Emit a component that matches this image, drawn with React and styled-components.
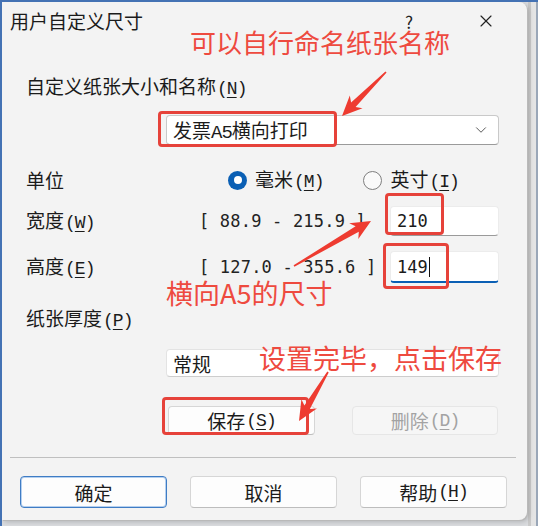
import React from 'react';
import styled, {createGlobalStyle} from 'styled-components';
import {ChevronDown, X} from 'lucide-react';

const GlobalStyle = createGlobalStyle`
  html, body {
    margin: 0;
    padding: 0;
  }
  body {
    font-family: "Noto Sans CJK SC", "Noto Sans", sans-serif;
    color: #1b1b1b;
  }
`;

const Screen = styled.div`
  position: relative;
  width: 538px;
  height: 526px;
  box-sizing: border-box;
  overflow: hidden;
  background: #dadcdf;
  border-left: 2px solid #4472b4;
  border-top: 2px solid #4472b4;
  display: flex;
  align-items: flex-start;
`;

const BackStrip = styled.div`
  position: absolute;
  top: 0;
  right: 0;
  width: 10px;
  height: 100%;
  background: linear-gradient(90deg, #c9c9c9 0 3px, #e4e4e4 3px 8px, #9aa7b8 8px);
`;

const Dialog = styled.div`
  position: relative;
  width: 525px;
  height: 518px;
  box-sizing: border-box;
  background: #f3f3f3;
  border-radius: 0 8px 8px 0;
  box-shadow: 1px 1px 0 #b9b9b9, 2px 2px 5px rgba(0, 0, 0, 0.18);
  display: flex;
  flex-direction: column;
`;

const TitleBar = styled.div`
  height: 38px;
  display: flex;
  align-items: center;
  padding: 0 18px 0 8px;
`;

const Title = styled.div`
  font-size: 19px;
  line-height: 24px;
  flex: 1;
`;

const TitleButton = styled.div`
  width: ${p => p.$w}px;
  margin-left: ${p => p.$ml || 0}px;
  height: 38px;
  display: flex;
  align-items: center;
  justify-content: center;
  font-size: 17px;
  color: #222;
`;

const Body = styled.div`
  padding: 0 28px 0 24px;
  display: flex;
  flex-direction: column;
`;

const Label = styled.div`
  font-size: 19px;
  line-height: 24px;
  margin-top: ${p => p.$gap || 0}px;
  width: ${p => (p.$w ? `${p.$w}px` : 'auto')};
  flex-shrink: 0;
  white-space: nowrap;
`;

const Paren = styled.span`
  font-family: "Liberation Mono", monospace;
  font-size: 18px;
  letter-spacing: -1px;
  margin-left: 1px;
`;

const Key = styled.span`
  text-decoration: underline;
  text-underline-offset: 3px;
`;

const Mnemonic = ({k}) => (
  <Paren>
    (<Key>{k}</Key>)
  </Paren>
);

const Combo = styled.div`
  margin: ${p => p.$gap}px 0 0 140px;
  width: 333px;
  height: ${p => p.$h}px;
  box-sizing: border-box;
  background: #fff;
  border: 1px solid ${p => (p.$plain ? '#e3e3e3' : '#c9c9c9')};
  border-bottom-color: ${p => (p.$plain ? '#cdcdcd' : '#9a9a9a')};
  border-radius: 4px;
  display: flex;
  align-items: center;
  padding: 0 8px 0 6px;
  font-size: 19px;
  justify-content: space-between;
`;

const Half = styled.span`
  font-family: "Liberation Mono", monospace;
  letter-spacing: -1px;
`;

const UnitRow = styled.div`
  margin-top: 23px;
  height: 24px;
  display: flex;
  align-items: center;
`;

const Radio = styled.div`
  display: flex;
  align-items: center;
  gap: 8px;
  margin-right: 40px;
  font-size: 19px;
  line-height: 24px;
`;

const RadioDot = styled.span`
  width: 19px;
  height: 19px;
  box-sizing: border-box;
  border-radius: 50%;
  display: grid;
  place-items: center;
  background: ${p => (p.$on ? '#0a5fb4' : '#fafafa')};
  border: ${p => (p.$on ? 'none' : '1px solid #7f7f7f')};
  &::after {
    content: '';
    width: 8px;
    height: 8px;
    border-radius: 50%;
    background: ${p => (p.$on ? '#fff' : 'transparent')};
  }
`;

const SizeRow = styled.div`
  margin-top: ${p => p.$gap}px;
  display: grid;
  grid-template-columns: 173px 191px 109px;
  align-items: center;
`;

const Range = styled.div`
  font-family: "DejaVu Sans Mono", monospace;
  font-size: 17px;
  letter-spacing: 0.2px;
  white-space: pre;
  color: #222;
`;

const Field = styled.div`
  height: ${p => p.$h}px;
  box-sizing: border-box;
  background: #fff;
  border: 1px solid #ececec;
  border-bottom: ${p => (p.$focus ? '2px solid #0a5fb4' : '1px solid #9a9a9a')};
  border-radius: 4px;
  padding-left: 6px;
  display: flex;
  align-items: center;
  font-family: "DejaVu Sans Mono", monospace;
  font-size: 17px;
`;

const Caret = styled.span`
  display: inline-block;
  width: 1px;
  height: 20px;
  background: #111;
  margin-left: 1px;
`;

const ButtonRow = styled.div`
  margin: 29px 0 0 142px;
  display: flex;
  gap: 37px;
`;

const Button = styled.div`
  width: ${p => p.$w || 147}px;
  height: ${p => p.$h || 29}px;
  box-sizing: border-box;
  border-radius: 4px;
  display: flex;
  align-items: center;
  justify-content: center;
  font-size: 19px;
  background: ${p => (p.$disabled ? '#f6f6f6' : '#fdfdfd')};
  color: ${p => (p.$disabled ? '#a3a3a3' : '#1b1b1b')};
  border: 1px solid ${p => (p.$primary ? '#3f7cc4' : p.$disabled ? '#e6e6e6' : '#d6d6d6')};
  border-bottom-color: ${p => (p.$primary ? '#3f7cc4' : p.$disabled ? '#e6e6e6' : '#bdbdbd')};
  box-shadow: ${p => (p.$primary ? 'inset 0 0 0 1px #b5d0ef' : 'none')};
`;

const Separator = styled.div`
  margin: 22px 11px 0 8px;
  height: 1px;
  background: #bfbfbf;
`;

const Footer = styled.div`
  margin-top: 18px;
  padding-left: 18px;
  display: flex;
  gap: 23px;
`;

const Note = styled.div`
  position: absolute;
  left: ${p => p.$x}px;
  top: ${p => p.$y}px;
  font-size: ${p => p.$size}px;
  line-height: 30px;
  color: #ee4a3f;
  white-space: nowrap;
`;

const Frame = styled.div`
  position: absolute;
  left: ${p => p.$x}px;
  top: ${p => p.$y}px;
  width: ${p => p.$w}px;
  height: ${p => p.$h}px;
  box-sizing: border-box;
  border: 3px solid #e6423a;
  border-radius: 4px;
`;

const Overlay = styled.svg`
  position: absolute;
  left: 0;
  top: 0;
  pointer-events: none;
`;

const arrowPoints = (x1, y1, x2, y2) => {
  const dx = x2 - x1;
  const dy = y2 - y1;
  const len = Math.hypot(dx, dy);
  const ux = dx / len;
  const uy = dy / len;
  const nx = -uy;
  const ny = ux;
  const head = 16;
  const bx = x2 - ux * head;
  const by = y2 - uy * head;
  const pts = [
    [x1 + nx * 0.8, y1 + ny * 0.8],
    [bx + nx * 3.2, by + ny * 3.2],
    [bx - ux * 4 + nx * 9, by - uy * 4 + ny * 9],
    [x2, y2],
    [bx - ux * 4 - nx * 9, by - uy * 4 - ny * 9],
    [bx - nx * 3.2, by - ny * 3.2],
    [x1 - nx * 0.8, y1 - ny * 0.8]
  ];
  return pts.map(p => p.map(v => v.toFixed(1)).join(',')).join(' ');
};

const arrows = [
  [384, 70, 340, 114],
  [292, 264, 369, 219],
  [326, 370, 297, 419]
];

const App = () => {
  return (
    <>
      <GlobalStyle />
      <Screen>
        <BackStrip />
        <Dialog>
          <TitleBar>
            <Title>用户自定义尺寸</Title>
            <TitleButton $w={20}>?</TitleButton>
            <TitleButton $w={46} $ml={44}>
              <X size={20} strokeWidth={1.4} />
            </TitleButton>
          </TitleBar>
          <Body>
            <Label $gap={34}>
              自定义纸张大小和名称<Mnemonic k="N" />
            </Label>
            <Combo $gap={14} $h={30}>
              <span>
                发票<Half>A5</Half>横向打印
              </span>
              <ChevronDown size={18} strokeWidth={1.3} color="#555" />
            </Combo>
            <UnitRow>
              <Label $w={202}>单位</Label>
              <Radio>
                <RadioDot $on />
                <span>
                  毫米<Mnemonic k="M" />
                </span>
              </Radio>
              <Radio>
                <RadioDot />
                <span>
                  英寸<Mnemonic k="I" />
                </span>
              </Radio>
            </UnitRow>
            <SizeRow $gap={14}>
              <Label>
                宽度<Mnemonic k="W" />
              </Label>
              <Range>[ 88.9 - 215.9 ]</Range>
              <Field $h={30}>210</Field>
            </SizeRow>
            <SizeRow $gap={15}>
              <Label>
                高度<Mnemonic k="E" />
              </Label>
              <Range>[ 127.0 - 355.6 ]</Range>
              <Field $h={32} $focus>
                149
                <Caret />
              </Field>
            </SizeRow>
            <Label $gap={23}>
              纸张厚度<Mnemonic k="P" />
            </Label>
            <Combo $gap={16} $h={28} $plain>
              <span>常规</span>
            </Combo>
            <ButtonRow>
              <Button>
                保存<Mnemonic k="S" />
              </Button>
              <Button $w={146} $disabled>
                删除<Mnemonic k="D" />
              </Button>
            </ButtonRow>
          </Body>
          <Separator />
          <Footer>
            <Button $h={32} $primary>
              确定
            </Button>
            <Button $h={32}>取消</Button>
            <Button $h={32}>
              帮助<Mnemonic k="H" />
            </Button>
          </Footer>
        </Dialog>

        <Note $x={188} $y={25} $size={26}>
          可以自行命名纸张名称
        </Note>
        <Note $x={164} $y={276} $size={27}>
          横向A5的尺寸
        </Note>
        <Note $x={257} $y={341} $size={27}>
          设置完毕，点击保存
        </Note>

        <Frame $x={156} $y={109} $w={179} $h={36} />
        <Frame $x={383} $y={191} $w={59} $h={42} />
        <Frame $x={381} $y={241} $w={66} $h={46} />
        <Frame $x={160} $y={395} $w={147} $h={38} />

        <Overlay width="538" height="526" viewBox="0 0 538 526">
          {arrows.map((a, i) => (
            <polygon key={i} points={arrowPoints(...a)} fill="#ee3b30" />
          ))}
        </Overlay>
      </Screen>
    </>
  );
};

export default App;
